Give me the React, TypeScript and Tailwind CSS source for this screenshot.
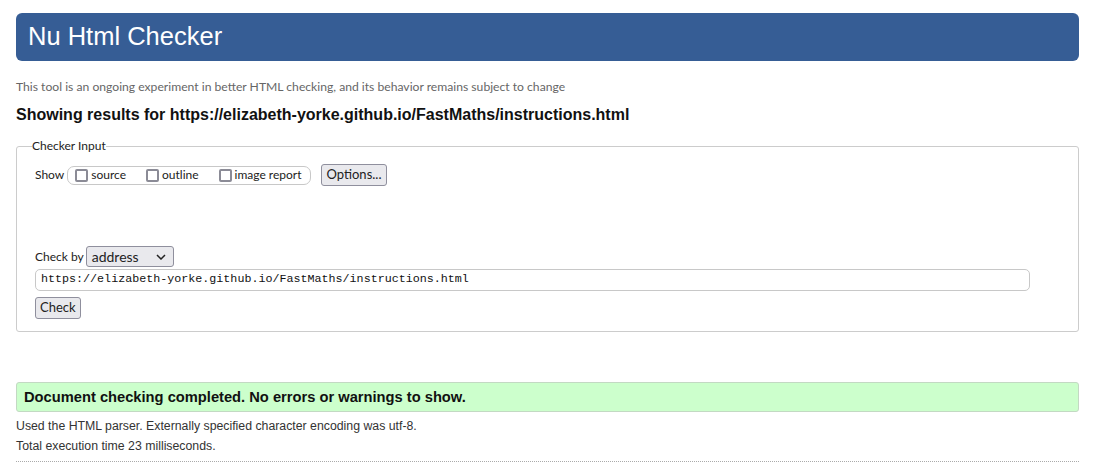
import React from 'react';

const SEGOE = 'font-["Lato",sans-serif]';
const ARIAL = 'font-["Liberation_Sans",Arial,sans-serif]';

function Box({ label }: { label: string }) {
  return (
    <label className="flex items-center">
      <span className="mr-[3px] h-[13px] w-[13px] rounded-[2px] border-2 border-[#8b8b96] bg-white" />
      <span>{label}</span>
    </label>
  );
}

export default function App() {
  return (
    <div className={`min-h-screen bg-white pl-4 pr-[17px] pt-[13px] text-[#222] ${ARIAL}`}>
      {/* header */}
      <div className="flex h-12 items-center rounded-md bg-[#365d95] pl-3 pb-[1px] text-[25.5px] text-white">
        Nu Html Checker
      </div>

      <p className={`mt-[19px] text-[12.15px] leading-[14px] text-[#666] ${SEGOE}`}>
        This tool is an ongoing experiment in better HTML checking, and its behavior remains subject to change
      </p>

      <h2 className="mt-[11px] text-[16px] font-bold leading-5 text-[#111]">
        Showing results for https://elizabeth-yorke.github.io/FastMaths/instructions.html
      </h2>

      {/* Checker Input */}
      <fieldset className={`mt-[13px] rounded-[3px] border border-[#ccc] pb-3 pl-[18px] ${SEGOE} text-[12px] text-[#222]`}>
        <legend className="-ml-[3px] px-0 leading-4 text-[12px]">Checker Input</legend>

        <div className="mt-[10px] flex h-[22px] items-center">
          <span className="mr-[3px]">Show</span>
          <div className="flex h-[19px] items-center gap-[20px] rounded-[7px] border border-[#c8c8c8] pl-[7px] pr-[8px]">
            <Box label="source" />
            <Box label="outline" />
            <Box label="image report" />
          </div>
          <button className="ml-[10px] h-[22px] rounded-[3px] border border-[#8f8f9d] bg-[#e9e9ed] px-[5px] text-[13px]">
            Options...
          </button>
        </div>

        <div className="mt-[60px] flex h-[21px] items-center">
          <span className="mr-[2px]">Check by</span>
          <div className="flex h-[21px] w-[88px] items-center justify-between rounded-[3px] border border-[#8f8f9d] bg-[#e9e9ed] pl-[5px] pr-[7px] text-[14px]">
            <span>address</span>
            <svg width="10" height="6" viewBox="0 0 10 6" fill="none" stroke="#222" strokeWidth="1.5">
              <path d="M1 1l4 4 4-4" />
            </svg>
          </div>
        </div>

        <div className="mt-[2px] flex h-[22px] w-[995px] items-center rounded-[5px] border border-[#c8c8c8] pl-[5px] font-['Liberation_Mono',monospace] text-[11.7px] text-[#111]">
          https://elizabeth-yorke.github.io/FastMaths/instructions.html
        </div>

        <button className="mt-[6px] h-[22px] rounded-[3px] border border-[#8f8f9d] bg-[#e9e9ed] px-[4px] text-[13px]">
          Check
        </button>
      </fieldset>

      <div className="mt-[50px] flex h-[30px] items-center rounded-[3px] border border-[#c3d9c3] bg-[#ccffcc] pl-[7px] text-[14.7px] font-bold text-[#111]">
        Document checking completed. No errors or warnings to show.
      </div>

      <p className="mt-[4px] text-[12.3px] leading-5 text-[#333]">
        Used the HTML parser. Externally specified character encoding was utf-8.
      </p>
      <p className="text-[12.3px] leading-5 text-[#333]">Total execution time 23 milliseconds.</p>
      <div className="mt-[5px] border-b border-dotted border-[#aaa]" />
    </div>
  );
}
